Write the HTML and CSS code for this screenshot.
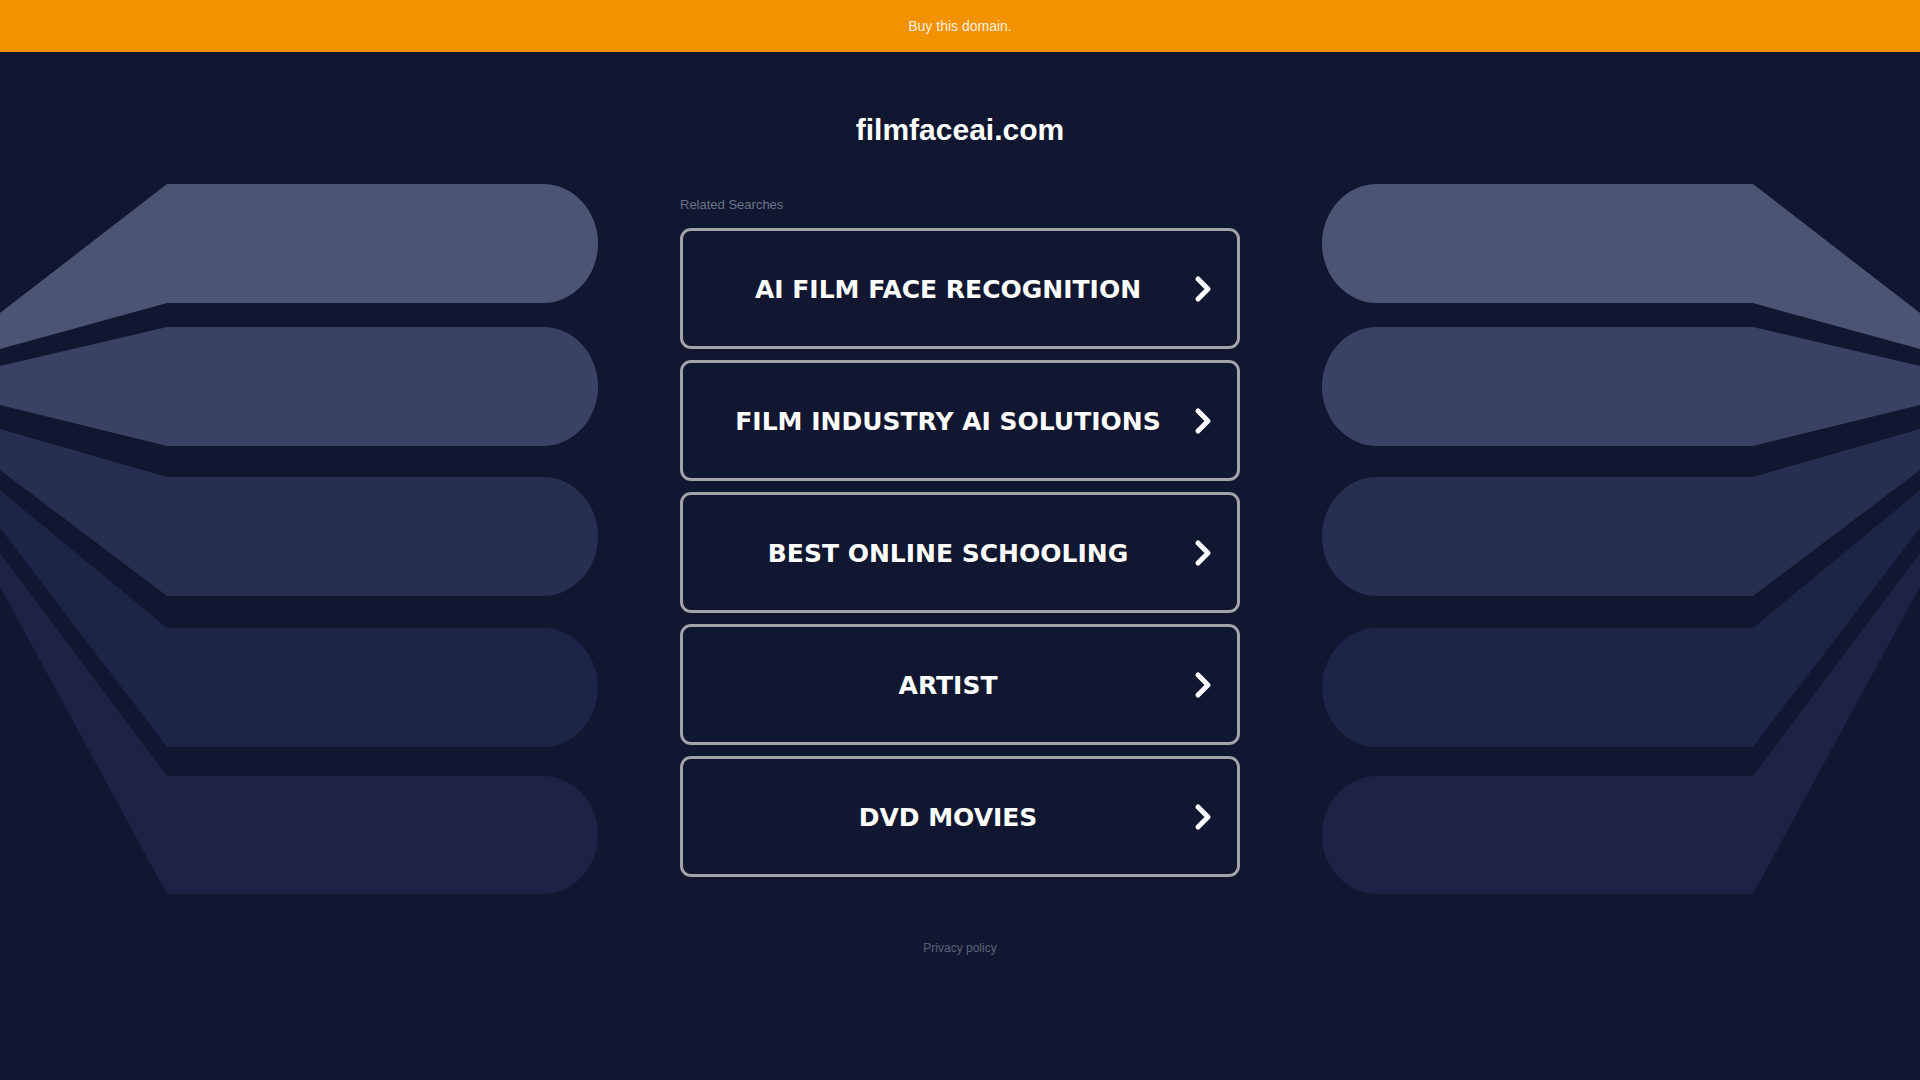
FILE: index.html
```html
<!DOCTYPE html>
<html lang="en">
<head>
    <meta charset="UTF-8">
    <meta name="viewport" content="width=device-width, initial-scale=1.0">
    <title>filmfaceai.com</title>
    <link rel="stylesheet" href="styles.css">
</head>
<body>
    <header class="buy-bar">
        <a href="#">Buy this domain.</a>
    </header>
    <main class="page">
        <h1 class="domain">filmfaceai.com</h1>

        <svg class="art art-left" viewBox="0 0 598 710" width="598" height="710" aria-hidden="true">
            <path fill="#4b5573" d="M167,0 H543 A55,59.5 0 0 1 543,119 H167 L0,165 V129 Z"/>
            <path fill="#3a4263" d="M167,143 H543 A55,59.5 0 0 1 543,262 H167 L0,221 V182 Z"/>
            <path fill="#262f50" d="M167,293 H543 A55,59.5 0 0 1 543,412 H167 L0,286 V245 Z"/>
            <path fill="#1d2547" d="M167,444 H543 A55,59.5 0 0 1 543,563 H167 L0,344 V306 Z"/>
            <path fill="#1c2344" d="M167,592 H543 A55,59 0 0 1 543,710 H167 L0,403 V369 Z"/>
        </svg>

        <section class="searches">
            <p class="searches-title">Related Searches</p>
            <!-- Related search links -->
            <a class="search-btn" href="#"><span>AI FILM FACE RECOGNITION</span><svg class="chev" viewBox="0 0 20 28" width="20" height="28"><polyline points="5,4 15,14 5,24"/></svg></a>
            <a class="search-btn" href="#"><span>FILM INDUSTRY AI SOLUTIONS</span><svg class="chev" viewBox="0 0 20 28" width="20" height="28"><polyline points="5,4 15,14 5,24"/></svg></a>
            <a class="search-btn" href="#"><span>BEST ONLINE SCHOOLING</span><svg class="chev" viewBox="0 0 20 28" width="20" height="28"><polyline points="5,4 15,14 5,24"/></svg></a>
            <a class="search-btn" href="#"><span>ARTIST</span><svg class="chev" viewBox="0 0 20 28" width="20" height="28"><polyline points="5,4 15,14 5,24"/></svg></a>
            <a class="search-btn" href="#"><span>DVD MOVIES</span><svg class="chev" viewBox="0 0 20 28" width="20" height="28"><polyline points="5,4 15,14 5,24"/></svg></a>
        </section>

        <svg class="art art-right" viewBox="0 0 598 710" width="598" height="710" aria-hidden="true">
            <path fill="#4b5573" d="M167,0 H543 A55,59.5 0 0 1 543,119 H167 L0,165 V129 Z"/>
            <path fill="#3a4263" d="M167,143 H543 A55,59.5 0 0 1 543,262 H167 L0,221 V182 Z"/>
            <path fill="#262f50" d="M167,293 H543 A55,59.5 0 0 1 543,412 H167 L0,286 V245 Z"/>
            <path fill="#1d2547" d="M167,444 H543 A55,59.5 0 0 1 543,563 H167 L0,344 V306 Z"/>
            <path fill="#1c2344" d="M167,592 H543 A55,59 0 0 1 543,710 H167 L0,403 V369 Z"/>
        </svg>

        <footer class="privacy">
            <a href="#">Privacy policy</a>
        </footer>
    </main>
</body>
</html>
```

FILE: styles.css
```css
* {
    margin: 0;
    padding: 0;
    box-sizing: border-box;
}

body {
    font-family: "Liberation Sans", Arial, sans-serif;
    background: #111730;
    color: white;
    min-height: 100vh;
}

a {
    text-decoration: none;
}

.buy-bar {
    height: 52px;
    background: #f39200;
    display: flex;
    justify-content: center;
    align-items: center;
}

.buy-bar a {
    color: rgba(255, 255, 255, 0.88);
    font-size: 14px;
}

.page {
    display: grid;
    grid-template-columns: 598px 1fr 598px;
}

.domain {
    grid-column: 1 / 4;
    text-align: center;
    font-size: 30px;
    line-height: 36px;
    font-weight: bold;
    margin-top: 60px;
    margin-bottom: 36px;
}

.art {
    display: block;
}

.art-right {
    transform: scaleX(-1);
}

.searches {
    width: 560px;
    justify-self: center;
    display: flex;
    flex-direction: column;
    gap: 11px;
}

.searches-title {
    font-size: 13px;
    line-height: 16px;
    color: #6b7389;
    margin-top: 13px;
    margin-bottom: 4px;
}

.search-btn {
    position: relative;
    height: 121px;
    border: 3px solid #a2a3a8;
    border-radius: 11px;
    display: flex;
    align-items: center;
    justify-content: center;
    padding-right: 24px;
    padding-top: 2px;
    color: white;
}

.search-btn span {
    font-family: "DejaVu Sans", Verdana, sans-serif;
    font-weight: bold;
    font-size: 25px;
}

.chev {
    position: absolute;
    right: 24px;
    top: 50%;
    margin-top: -14px;
}

.chev polyline {
    fill: none;
    stroke: white;
    stroke-width: 5;
    stroke-linecap: round;
    stroke-linejoin: round;
}

.privacy {
    grid-column: 1 / 4;
    text-align: center;
    margin-top: 47px;
    font-size: 12px;
    line-height: 14px;
}

.privacy a {
    color: #5c6379;
}
```
